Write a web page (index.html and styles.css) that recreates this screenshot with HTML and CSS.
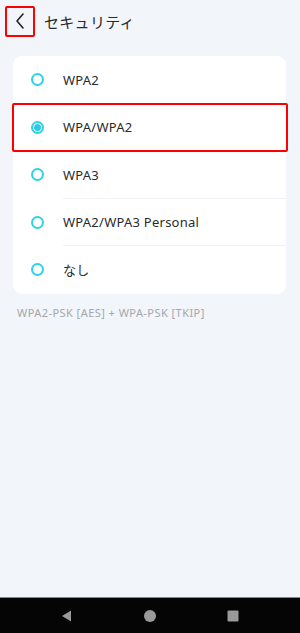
FILE: index.html
```html
<!DOCTYPE html>
<html lang="ja">
<head>
<meta charset="utf-8">
<link rel="stylesheet" href="styles.css">
</head>
<body>
<div class="screen">
  <header class="topbar">
    <div class="back-box">
      <svg class="back" width="14" height="18" viewBox="0 0 14 18"><path d="M10 2 L4 9 L10 16" fill="none" stroke="#222" stroke-width="1.6" stroke-linecap="round" stroke-linejoin="round"/></svg>
    </div>
    <h1 class="title">セキュリティ</h1>
  </header>
  <main class="content">
    <div class="card">
      <div class="row"><span class="radio"></span><span class="label">WPA2</span></div>
      <div class="row selected"><span class="radio on"></span><span class="label">WPA/WPA2</span></div>
      <div class="row"><span class="radio"></span><span class="label">WPA3</span></div>
      <div class="row"><span class="radio"></span><span class="label">WPA2/WPA3 Personal</span></div>
      <div class="row last"><span class="radio"></span><span class="label">なし</span></div>
    </div>
    <p class="note">WPA2-PSK [AES] + WPA-PSK [TKIP]</p>
  </main>
  <nav class="navbar">
    <svg width="14" height="14" viewBox="0 0 14 14"><path d="M11 1.5 L11 12.5 L2 7 Z" fill="#9a9a9a"/></svg>
    <svg width="14" height="14" viewBox="0 0 14 14"><circle cx="7" cy="7" r="6" fill="#9a9a9a"/></svg>
    <svg width="14" height="14" viewBox="0 0 14 14"><rect x="1.5" y="1.5" width="11" height="11" rx="1" fill="#9a9a9a"/></svg>
  </nav>
</div>
</body>
</html>
```
FILE: styles.css
```css
* { box-sizing: border-box; }
html, body { margin: 0; padding: 0; }
body {
  font-family: "Noto Sans", "Noto Sans CJK JP", sans-serif;
  background: #f2f5f9;
  width: 300px;
  height: 633px;
  overflow: hidden;
}
.screen {
  display: flex;
  flex-direction: column;
  height: 633px;
}
.topbar {
  display: flex;
  align-items: center;
  height: 42px;
  padding-left: 5px;
  gap: 9px;
}
.back-box {
  width: 30px;
  height: 31px;
  border: 2.5px solid #ff0000;
  border-radius: 2px;
  display: flex;
  align-items: center;
  justify-content: center;
}
.title {
  margin: 0;
  font-size: 15px;
  font-weight: 400;
  color: #2a2a2a;
  letter-spacing: 0.3px;
}
.content {
  flex: 1;
  padding: 14px 13px 0 13px;
}
.card {
  background: #fff;
  border-radius: 9px;
  width: 273px;
}
.row {
  position: relative;
  display: flex;
  align-items: center;
  height: 47.5px;
  padding-left: 18px;
  gap: 19px;
}
.row::after {
  content: "";
  position: absolute;
  left: 50px;
  right: 0;
  bottom: 0;
  height: 1px;
  background: #f0f2f5;
}
.row.last::after { display: none; }
.row.selected::before {
  content: "";
  position: absolute;
  left: -1px;
  right: -2px;
  top: -1px;
  bottom: -1px;
  border: 2.5px solid #ff0000;
  border-radius: 2px;
  z-index: 1;
}
.radio {
  width: 13px;
  height: 13px;
  border: 2px solid #2ed3e8;
  border-radius: 50%;
  flex: none;
  display: flex;
  align-items: center;
  justify-content: center;
}
.radio.on::after {
  content: "";
  width: 7px;
  height: 7px;
  border-radius: 50%;
  background: #2ec9e4;
}
.label {
  font-size: 13px;
  color: #2a2a2a;
  letter-spacing: 0.25px;
}
.note {
  margin: 11px 0 0 4px;
  font-size: 11px;
  color: #a3a8ae;
  letter-spacing: 0.45px;
}
.navbar {
  height: 36px;
  background: #050505;
  border-top: 1px solid #888;
  display: flex;
  align-items: center;
  justify-content: space-between;
  padding: 0 60px;
}
```
